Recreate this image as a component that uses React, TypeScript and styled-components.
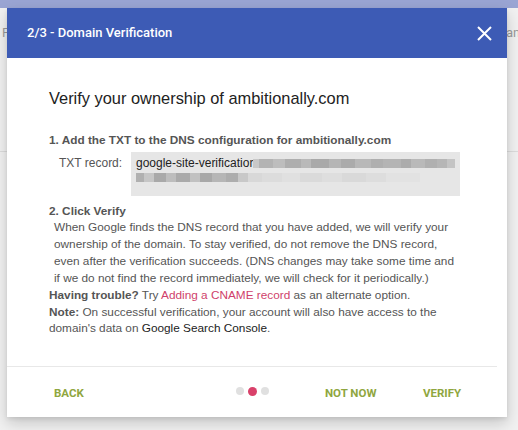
import styled, { createGlobalStyle } from "styled-components";

const Global = createGlobalStyle`
  html, body {
    margin: 0;
    padding: 0;
    background: #eeeeee;
    overflow: hidden;
  }
`;

const Page = styled.div`
  position: relative;
  width: 518px;
  height: 430px;
  background: #f1f1f1;
  overflow: hidden;
`;

const TopBar = styled.div`
  height: 8px;
  background: #9aa5d3;
`;

const BackText = styled.div<{ side: "left" | "right" }>`
  position: absolute;
  top: 25px;
  ${(p) => (p.side === "left" ? "left: 2px;" : "left: 506px;")}
  font-family: Roboto, sans-serif;
  font-size: 13px;
  color: #9a9a9a;
  white-space: nowrap;
`;

const BackLine = styled.div`
  position: absolute;
  top: 151px;
  left: 0;
  right: 0;
  height: 1px;
  background: #dcdcdc;
`;

const Dialog = styled.div`
  position: absolute;
  top: 8px;
  left: 7px;
  width: 500px;
  height: 409px;
  background: #fff;
  box-shadow: 0 6px 14px rgba(0, 0, 0, 0.18), 0 2px 4px rgba(0, 0, 0, 0.08);
  display: flex;
  flex-direction: column;
`;

const Header = styled.div`
  height: 50px;
  background: #3d5bb5;
  display: flex;
  align-items: center;
  justify-content: space-between;
  padding: 0 15px 0 20px;
  flex-shrink: 0;
`;

const Title = styled.div`
  font-family: Roboto, sans-serif;
  font-weight: 500;
  font-size: 13px;
  color: #fff;
  margin-top: -1px;
`;

const Close = styled.button`
  border: 0;
  background: none;
  padding: 0;
  width: 15px;
  height: 15px;
  display: flex;
  cursor: pointer;
`;

const Body = styled.div`
  flex: 1;
  padding: 31px 40px 0 42px;
  font-family: "Liberation Sans", Arial, sans-serif;
  color: #555;
`;

const Heading = styled.h2`
  margin: 0 0 24px;
  font-weight: 400;
  font-size: 16.4px;
  color: #222;
`;

const Step = styled.div`
  font-weight: 700;
  font-size: 11.8px;
  color: #555;
  line-height: 16px;
`;

const RecordRow = styled.div`
  display: flex;
  align-items: flex-start;
  margin: 4px 0 7px 10px;
`;

const RecordLabel = styled.div`
  width: 72px;
  font-size: 12px;
  color: #555;
  padding-top: 4px;
`;

const RecordBox = styled.div`
  width: 329px;
  height: 44px;
  background: #e6e6e6;
  padding: 4px 5px;
  box-sizing: border-box;
`;

const RecordLine = styled.div`
  display: flex;
  align-items: center;
  height: 14px;
  font-size: 12px;
  color: #222;
  white-space: nowrap;
`;

const Pixel = styled.span<{ w: number; c: string }>`
  display: inline-block;
  flex-shrink: 0;
  width: ${(p) => p.w}px;
  height: 9px;
  background: ${(p) => p.c};
`;

const Para = styled.p`
  margin: 0 0 0 5px;
  width: 407px;
  font-size: 11.8px;
  line-height: 17px;
  color: #555;
`;

const Line = styled.p`
  margin: 0;
  font-size: 11.8px;
  line-height: 16.5px;
  color: #555;
`;

const Strong = styled.b`
  font-weight: 700;
  color: #555;
`;

const Link = styled.a`
  color: #d03f6b;
  text-decoration: none;
`;

const Dark = styled.span`
  color: #222;
`;

const Footer = styled.div`
  margin-right: 10px;
  border-top: 1px solid #e8e8e8;
  height: 50px;
  display: grid;
  grid-template-columns: 182px 89px 98px 1fr;
  align-items: center;
  padding-left: 47px;
`;

const FooterButton = styled.button`
  border: 0;
  background: none;
  padding: 0;
  text-align: left;
  font-family: Roboto, sans-serif;
  font-weight: 700;
  font-size: 11.5px;
  color: #8fa640;
  cursor: pointer;
  margin-top: 1px;
`;

const Dots = styled.div`
  display: flex;
  gap: 4px;
  align-items: center;
  margin-top: -2px;
`;

const Dot = styled.span<{ active?: boolean }>`
  width: ${(p) => (p.active ? 9 : 8)}px;
  height: ${(p) => (p.active ? 9 : 8)}px;
  border-radius: 50%;
  background: ${(p) => (p.active ? "#d9416a" : "#e0e0e0")};
`;

const line1: [number, string][] = [
  [6, "#c8c8c8"], [14, "#b3b3b3"], [12, "#bdbdbd"], [16, "#aeaeae"], [10, "#b9b9b9"],
  [18, "#a9a9a9"], [12, "#b5b5b5"], [14, "#ababab"], [16, "#b8b8b8"], [12, "#afafaf"],
  [18, "#b4b4b4"], [10, "#acacac"], [14, "#b9b9b9"], [12, "#b0b0b0"], [10, "#b6b6b6"],
  [8, "#c4c4c4"],
];

const line2: [number, string][] = [
  [8, "#b0b0b0"], [10, "#c6c6c6"], [12, "#a9a9a9"], [10, "#bdbdbd"], [14, "#aaaaaa"],
  [10, "#c1c1c1"], [12, "#a8a8a8"], [14, "#b6b6b6"], [12, "#adadad"], [10, "#c8c8c8"],
  [14, "#d8d8d8"], [20, "#dcdcdc"], [18, "#e0e0e0"], [22, "#dadada"], [20, "#dedede"],
  [24, "#d9d9d9"], [20, "#dddddd"], [34, "#e2e2e2"],
];

export default function App() {
  return (
    <Page>
      <Global />
      <TopBar />
      <BackText side="left">F</BackText>
      <BackText side="right">an</BackText>
      <BackLine />
      <Dialog>
        <Header>
          <Title>2/3 - Domain Verification</Title>
          <Close aria-label="Close">
            <svg width="15" height="15" viewBox="0 0 15 15">
              <path d="M1 1 L14 14 M14 1 L1 14" stroke="#fff" strokeWidth="2" />
            </svg>
          </Close>
        </Header>
        <Body>
          <Heading>Verify your ownership of ambitionally.com</Heading>
          <Step>1. Add the TXT to the DNS configuration for ambitionally.com</Step>
          <RecordRow>
            <RecordLabel>TXT record:</RecordLabel>
            <RecordBox>
              <RecordLine>
                google-site-verificatior
                {line1.map(([w, c], i) => (
                  <Pixel key={i} w={w} c={c} />
                ))}
              </RecordLine>
              <RecordLine>
                {line2.map(([w, c], i) => (
                  <Pixel key={i} w={w} c={c} />
                ))}
              </RecordLine>
            </RecordBox>
          </RecordRow>
          <Step>2. Click Verify</Step>
          <Para>
            When Google finds the DNS record that you have added, we will verify your ownership of the
            domain. To stay verified, do not remove the DNS record, even after the verification
            succeeds. (DNS changes may take some time and if we do not find the record immediately, we
            will check for it periodically.)
          </Para>
          <Line>
            <Strong>Having trouble?</Strong> Try <Link href="#">Adding a CNAME record</Link> as an
            alternate option.
          </Line>
          <Line>
            <Strong>Note:</Strong> On successful verification, your account will also have access to the
            domain's data on <Dark>Google Search Console</Dark>.
          </Line>
        </Body>
        <Footer>
          <FooterButton>BACK</FooterButton>
          <Dots>
            <Dot />
            <Dot active />
            <Dot />
          </Dots>
          <FooterButton>NOT NOW</FooterButton>
          <FooterButton>VERIFY</FooterButton>
        </Footer>
      </Dialog>
    </Page>
  );
}
